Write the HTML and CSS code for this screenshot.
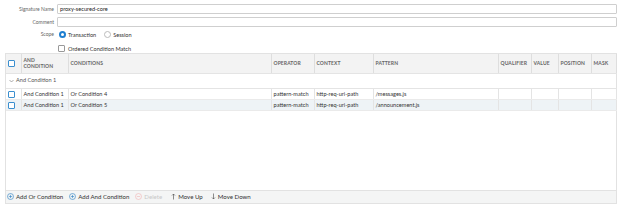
FILE: index.html
```html
<!DOCTYPE html>
<html>
<head>
<meta charset="utf-8">
<link rel="stylesheet" href="styles.css">
</head>
<body>
<div class="form">
  <div class="label">Signature Name</div>
  <div class="field"><div class="input">proxy-secured-core</div></div>
  <div class="label">Comment</div>
  <div class="field"><div class="input"></div></div>
  <div class="label scope-label">Scope</div>
  <div class="field radios">
    <span class="radio on"></span><span class="rtext">Transaction</span>
    <span class="radio"></span><span class="rtext">Session</span>
  </div>
  <div class="label"></div>
  <div class="field checkrow"><span class="cb gray"></span><span class="rtext">Ordered Condition Match</span></div>
</div>

<div class="grid">
  <table>
    <colgroup>
      <col style="width:15px"><col style="width:47px"><col style="width:203px"><col style="width:43px"><col style="width:59px"><col style="width:125px"><col style="width:33px"><col style="width:27px"><col style="width:33px"><col style="width:25px">
    </colgroup>
    <thead>
      <tr>
        <th class="cbcell"><span class="cb"></span></th>
        <th>AND<br>CONDITION</th>
        <th>CONDITIONS</th>
        <th>OPERATOR</th>
        <th>CONTEXT</th>
        <th>PATTERN</th>
        <th>QUALIFIER</th>
        <th>VALUE</th>
        <th>POSITION</th>
        <th>MASK</th>
      </tr>
    </thead>
    <tbody>
      <tr class="group">
        <td colspan="10"><span class="chev"><svg width="5" height="4" viewBox="0 0 5 4"><path d="M0.5 1 L2.5 3 L4.5 1" fill="none" stroke="#888" stroke-width="0.7"/></svg></span>And Condition 1</td>
      </tr>
      <tr class="row">
        <td class="cbcell"><span class="cb"></span></td>
        <td>And Condition 1</td>
        <td>Or Condition 4</td>
        <td>pattern-match</td>
        <td>http-req-uri-path</td>
        <td>/messages.js</td>
        <td></td><td></td><td></td><td></td>
      </tr>
      <tr class="row alt">
        <td class="cbcell"><span class="cb"></span></td>
        <td>And Condition 1</td>
        <td>Or Condition 5</td>
        <td>pattern-match</td>
        <td>http-req-uri-path</td>
        <td>/announcement.js</td>
        <td></td><td></td><td></td><td></td>
      </tr>
    </tbody>
  </table>
  <div class="empty"></div>
  <div class="toolbar">
    <span class="btn"><svg width="7" height="7" viewBox="0 0 7 7"><circle cx="3.5" cy="3.5" r="3" fill="none" stroke="#2b7fc3" stroke-width="0.6"/><path d="M3.5 1.8 V5.2 M1.8 3.5 H5.2" stroke="#2b7fc3" stroke-width="0.6"/></svg>Add Or Condition</span>
    <span class="btn"><svg width="7" height="7" viewBox="0 0 7 7"><circle cx="3.5" cy="3.5" r="3" fill="none" stroke="#2b7fc3" stroke-width="0.6"/><path d="M3.5 1.8 V5.2 M1.8 3.5 H5.2" stroke="#2b7fc3" stroke-width="0.6"/></svg>Add And Condition</span>
    <span class="btn disabled"><svg width="7" height="7" viewBox="0 0 7 7"><circle cx="3.5" cy="3.5" r="3" fill="none" stroke="#f2b3b3" stroke-width="0.6"/><path d="M1.8 3.5 H5.2" stroke="#f2b3b3" stroke-width="0.6"/></svg>Delete</span>
    <span class="btn arrow"><svg width="5" height="7" viewBox="0 0 5 7"><path d="M2.5 6.5 V1 M1 2.5 L2.5 1 L4 2.5" fill="none" stroke="#444" stroke-width="0.6"/></svg>Move Up</span>
    <span class="btn arrow"><svg width="5" height="7" viewBox="0 0 5 7"><path d="M2.5 0.5 V6 M1 4.5 L2.5 6 L4 4.5" fill="none" stroke="#444" stroke-width="0.6"/></svg>Move Down</span>
  </div>
</div>
</body>
</html>
```

FILE: styles.css
```css
* { box-sizing: border-box; }
html, body { margin: 0; padding: 0; background: #fff; }
body {
  font-family: Lato, "Open Sans", "Liberation Sans", sans-serif;
  font-size: 5.6px;
  color: #333;
}
.form {
  display: grid;
  grid-template-columns: 54px 560px;
  column-gap: 3px;
  row-gap: 3px;
  padding-top: 4px;
  grid-auto-rows: 10px;
}
.label {
  text-align: right;
  color: #666;
  font-size: 5px;
  line-height: 10px;
}
.scope-label { line-height: 8px; }
.input {
  height: 10px;
  border: 1px solid #cfcfcf;
  border-radius: 1px;
  padding-left: 2px;
  line-height: 8px;
  color: #222;
}
.radios, .checkrow {
  display: flex;
  align-items: center;
  padding-left: 2px;
}
.radios { margin-top: -1px; }
.checkrow { margin-top: 0; padding-left: 1px; }
.radio {
  width: 7px; height: 7px;
  border-radius: 50%;
  border: 0.7px solid #bbb;
  margin-right: 2px;
  flex: none;
}
.radio.on { border: 2px solid #1f7fd0; background: #fff; }
.rtext { margin-right: 8px; color: #333; }
.cb {
  display: inline-block;
  width: 7px; height: 7px;
  border: 0.8px solid #3b8fcf;
  border-radius: 1px;
  background: #fff;
  flex: none;
  vertical-align: middle;
}
.cb.gray { border-color: #999; margin-right: 3px; }
.grid {
  margin: 0 0 0 5px;
  width: 612px;
  border: 1px solid #e2e2e2;
  display: flex;
  flex-direction: column;
}
table {
  border-collapse: collapse;
  table-layout: fixed;
  width: 610px;
}
th {
  background: #f3f3f3;
  color: #666;
  font-weight: 700;
  font-size: 5px;
  text-align: left;
  height: 19px;
  padding: 0 2px;
  border-right: 1px solid #dedede;
  border-bottom: 1px solid #e4e4e4;
  line-height: 6px;
  letter-spacing: 0.1px;
}
.cbcell { padding: 0 0 0 2px; }
.group td {
  height: 15px;
  color: #555;
  padding-left: 3px;
  border-bottom: 1px solid #e4e4e4;
}
.chev { display: inline-block; margin-right: 2px; vertical-align: middle; position: relative; top: -1px; }
.row td {
  height: 11px;
  padding: 0 2px;
  border-right: 1px solid #e4e4e4;
  border-bottom: 1px solid #eaeaea;
  white-space: nowrap;
  overflow: hidden;
  color: #333;
}
.row.alt td { background: #eef3f6; }
.empty { height: 79px; }
.toolbar {
  height: 13px;
  background: #f4f5f5;
  border-top: 1px solid #e2e2e2;
  display: flex;
  align-items: center;
  padding-left: 1px;
  color: #333;
  font-size: 6.1px;
}
.btn {
  display: inline-flex;
  align-items: center;
  margin-right: 6px;
}
.btn svg { margin-right: 2px; }
.btn.disabled { margin-right: 9px; }
.btn.arrow { margin-right: 8px; }
.btn.arrow svg { margin-right: 2px; }
.btn.disabled { color: #c8c8c8; }
```
